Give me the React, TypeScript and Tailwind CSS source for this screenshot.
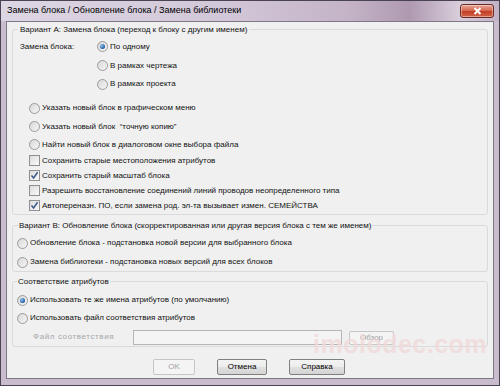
import React from "react";

const font = "font-['Liberation_Sans',Arial,sans-serif]";

const Radio = ({ checked = false }: { checked?: boolean }) => (
  <span className="flex h-[11px] w-[11px] shrink-0 items-center justify-center rounded-full border border-[#9a9a9a] bg-[linear-gradient(135deg,#d8d8d8,#f6f6f6)]">
    {checked && (
      <span className="h-[5px] w-[5px] rounded-full bg-[radial-gradient(circle_at_35%_35%,#8fc3f0,#1f5a9e_70%)]" />
    )}
  </span>
);

const Check = ({ checked = false }: { checked?: boolean }) => (
  <span className="flex h-[11px] w-[11px] shrink-0 items-center justify-center border border-[#8f8f8f] bg-[linear-gradient(135deg,#dcdcdc,#fafafa)]">
    {checked && (
      <svg width="9" height="9" viewBox="0 0 9 9">
        <path d="M1.5 4.5 L3.6 7 L7.6 1.2" fill="none" stroke="#3a5a8c" strokeWidth="1.5" />
      </svg>
    )}
  </span>
);

const Option = ({
  type,
  checked,
  label,
  className,
}: {
  type: "radio" | "check";
  checked?: boolean;
  label: string;
  className: string;
}) => (
  <div className={`flex items-center gap-[2px] ${className}`}>
    {type === "radio" ? <Radio checked={checked} /> : <Check checked={checked} />}
    <span className="whitespace-pre">{label}</span>
  </div>
);

const Button = ({ label, w, disabled }: { label: string; w: string; disabled?: boolean }) => (
  <button
    className={`${w} h-[16px] rounded-[2px] border text-[8px] leading-none ${
      disabled
        ? "border-[#c6c6c6] bg-[#f4f4f4] text-[#a0a0a0]"
        : "border-[#808080] bg-[linear-gradient(#f4f4f4,#ececec_50%,#e0e0e0_51%,#d4d4d4)] text-black"
    }`}
  >
    {label}
  </button>
);

export default function App() {
  return (
    <div className={`${font} relative flex h-[386px] w-[500px] flex-col overflow-hidden border border-[#4a4452] bg-[#c9bdcd] text-[8px] text-[#111]`}>
      {/* title bar */}
      <div className="flex h-[20px] shrink-0 items-center bg-[linear-gradient(90deg,#ddd6e3,#d2c7d8_45%,#c4b3c7_70%,#ae99b1_82%,#d8cdda_92%,#c3b2c6)] pl-[6px] pr-[5px]">
        <span className="flex-1 text-[9px] text-black">Замена блока / Обновление блока / Замена библиотеки</span>
        <div className="flex h-[14px] w-[34px] items-center justify-center rounded-[3px] border border-[#6a2a22] bg-[linear-gradient(#e9a796,#d4644b_50%,#c23b20_51%,#d0654a)] shadow-[inset_0_0_0_1px_rgba(255,255,255,0.4)]">
          <svg width="9" height="8" viewBox="0 0 9 8">
            <path d="M1.5 1 L7.5 7 M7.5 1 L1.5 7" stroke="#fff" strokeWidth="2" />
          </svg>
        </div>
      </div>

      {/* client area */}
      <div className="mx-[5px] mb-[6px] flex flex-1 flex-col border border-[#7d7786] bg-[#f0f0f0]">
        {/* Variant A */}
        <fieldset className="mx-[5px] mt-[1px] rounded-[3px] border border-[#dadada] pb-[1px]">
          <legend className="ml-[5px] px-[2px] leading-[13px]">
            Вариант А: Замена блока (переход к блоку с другим именем)
          </legend>
          <div className="mt-[1px] flex h-[19px] items-center pl-[7px]">
            <span className="w-[77px]">Замена блока:</span>
            <Option type="radio" checked label="По одному" className="" />
          </div>
          <Option type="radio" label="В рамках чертежа" className="h-[19px] pl-[84px]" />
          <Option type="radio" label="В рамках проекта" className="h-[18px] pl-[84px]" />
          <div className="h-[6px]" />
          <Option type="radio" label="Указать новый блок в графическом меню" className="h-[18px] pl-[16px]" />
          <Option type="radio" label="Указать новый блок  “точную копию”" className="h-[19px] pl-[16px]" />
          <Option type="radio" label="Найти новый блок в диалоговом окне выбора файла" className="h-[17px] pl-[16px]" />
          <Option type="check" label="Сохранить старые местоположения атрибутов" className="h-[15px] pl-[16px]" />
          <Option type="check" checked label="Сохранить старый масштаб блока" className="h-[15px] pl-[16px]" />
          <Option type="check" label="Разрешить восстановление соединений линий проводов неопределенного типа" className="h-[15px] pl-[16px]" />
          <Option type="check" checked label="Автопереназн. ПО, если замена род. эл-та вызывает измен. СЕМЕЙСТВА" className="h-[15px] pl-[16px]" />
        </fieldset>

        {/* Variant B */}
        <fieldset className="mx-[5px] mt-[4px] rounded-[3px] border border-[#dadada]">
          <legend className="ml-[5px] px-[1px] leading-[13px]">
            Вариант В: Обновление блока (скорректированная или другая версия блока с тем же именем)
          </legend>
          <Option type="radio" label="Обновление блока - подстановка новой версии для выбранного блока" className="mt-[1px] h-[20px] pl-[4px]" />
          <Option type="radio" label="Замена библиотеки - подстановка новых версий для всех блоков" className="h-[18px] pl-[4px]" />
        </fieldset>

        {/* Attribute mapping */}
        <fieldset className="mx-[5px] mt-[3px] rounded-[3px] border border-[#dadada]">
          <legend className="ml-[4px] px-[1px] leading-[13px]">Соответствие атрибутов</legend>
          <Option type="radio" checked label="Использовать те же имена атрибутов (по умолчанию)" className="mt-[2px] h-[20px] pl-[4px]" />
          <Option type="radio" label="Использовать файл соответствия атрибутов" className="h-[16px] pl-[4px]" />
          <div className="flex h-[20px] items-end pb-[1px] pl-[20px]">
            <span className="w-[100px] self-center whitespace-nowrap pt-[3px] tracking-[0.6px] text-[#a6a6a6]">Файл соответствия</span>
            <div className="h-[15px] w-[209px] border border-[#b5b5b5] bg-[#f4f4f4]" />
            <button className="ml-[7px] h-[14px] w-[45px] rounded-[2px] border border-[#c6c6c6] bg-[#f4f4f4] text-[8px] leading-none text-[#a0a0a0]">
              Обзор
            </button>
          </div>
        </fieldset>

        {/* buttons */}
        <div className="mt-[12px] flex gap-[22px] pl-[146px]">
          <Button label="OK" w="w-[42px]" disabled />
          <Button label="Отмена" w="w-[50px]" />
          <Button label="Справка" w="w-[56px]" />
        </div>
      </div>

      {/* watermark */}
      <span className="pointer-events-none absolute left-[312px] top-[331px] whitespace-nowrap text-[25px] font-bold leading-none tracking-[0.5px] text-[#f1dada] opacity-80">
        imolodec.com
      </span>
    </div>
  );
}
